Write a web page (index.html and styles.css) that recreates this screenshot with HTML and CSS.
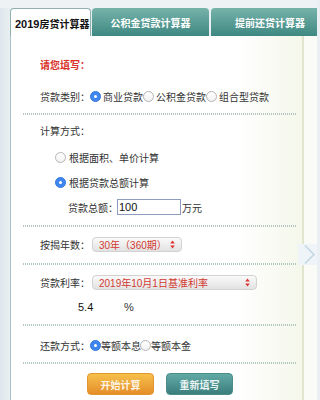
FILE: index.html
```html
<!DOCTYPE html>
<html lang="zh-CN">
<head>
<meta charset="utf-8">
<title>房贷计算器</title>
<link rel="stylesheet" href="styles.css">
</head>
<body>
<div class="page">
  <div class="tabs">
    <div class="tab tab-active"><span class="num">2019</span>房贷计算器</div>
    <div class="tab tab-gjj">公积金贷款计算器</div>
    <div class="tab tab-tq">提前还贷计算器</div>
  </div>
  <div class="panel">
    <div class="form">
      <div class="row title mt18">请您填写：</div>
      <div class="row mt12">
        <span class="label">贷款类别：</span>
        <span class="radio on"></span><span class="opt">商业贷款</span>
        <span class="radio"></span><span class="opt">公积金贷款</span>
        <span class="radio"></span><span class="opt">组合型贷款</span>
      </div>
      <div class="sep mt7"></div>
      <div class="row mt5">计算方式：</div>
      <div class="row indent mt7"><span class="radio"></span><span class="opt">根据面积、单价计算</span></div>
      <div class="row indent mt5"><span class="radio on"></span><span class="opt">根据贷款总额计算</span></div>
      <div class="row indent2 mt5">
        <span class="label">贷款总额：</span>
        <span class="input">100</span>
        <span class="unit">万元</span>
      </div>
      <div class="sep mt8"></div>
      <div class="row mt7">
        <span class="label">按揭年数：</span>
        <span class="select sel-years">30年（360期）<svg class="arr" width="5" height="9" viewBox="0 0 5 9"><path d="M2.5 0.5L4.8 3.6H0.2Z M2.5 8.5L4.8 5.4H0.2Z" fill="#d33"/></svg></span>
      </div>
      <div class="sep mt9"></div>
      <div class="row mt7">
        <span class="label">贷款利率：</span>
        <span class="select sel-rate">2019年10月1日基准利率<svg class="arr" width="5" height="9" viewBox="0 0 5 9"><path d="M2.5 0.5L4.8 3.6H0.2Z M2.5 8.5L4.8 5.4H0.2Z" fill="#d33"/></svg></span>
      </div>
      <div class="row indent3 mt5">
        <span class="rate">5.4</span>
        <span class="pct">%</span>
      </div>
      <div class="sep mt7"></div>
      <div class="row mt9">
        <span class="label">还款方式：</span>
        <span class="radio on"></span><span class="opt opt-r">等额本息</span>
        <span class="radio radio-r"></span><span class="opt opt-r">等额本金</span>
      </div>
      <div class="sep mt7"></div>
      <div class="btns mt9">
        <span class="btn btn-go">开始计算</span>
        <span class="btn btn-reset">重新填写</span>
      </div>
    </div>
    <div class="rule"></div>
    <div class="side"></div>
  </div>
</div>
<svg class="chev" width="19" height="21" viewBox="0 0 19 21"><rect x="0" y="0" width="19" height="21" fill="#eef4f8"/><path d="M7 1.5L16 10.5L7 19.5" fill="none" stroke="#c3d6e4" stroke-width="1.6"/></svg>
</body>
</html>
```

FILE: styles.css
```css
html, body {
  margin: 0;
  padding: 0;
}
body {
  width: 317px;
  height: 400px;
  overflow: hidden;
  position: relative;
  background: linear-gradient(90deg, #dde7ed 0, #e9eff2 10px);
  font-family: "Noto Sans CJK SC", "Liberation Sans", sans-serif;
  font-size: 10px;
  color: #333;
}
.page {
  padding: 8px 0 0 10px;
  height: 392px;
  display: flex;
  flex-direction: column;
  background: linear-gradient(180deg, #eef2f4 0, #eef2f4 8px, transparent 8px);
}
.tabs {
  display: flex;
  height: 28px;
  flex: none;
}
.tab {
  box-sizing: border-box;
  height: 28px;
  display: flex;
  align-items: center;
  justify-content: center;
  font-weight: bold;
  color: #fff;
  border-radius: 4px 4px 0 0;
  background: linear-gradient(180deg, #76b2aa, #3e8882);
  white-space: nowrap;
}
.num {
  font-family: "Liberation Sans", sans-serif;
  font-size: 11px;
}
.tab-active {
  width: 81px;
  background: #fff;
  color: #111;
  border: 1px solid #8fb0ad;
  border-bottom: none;
  justify-content: flex-start;
  padding-left: 4px;
  padding-top: 2px;
}
.tab-gjj {
  width: 117px;
  margin-left: 1px;
}
.tab-tq {
  flex: 1;
  margin-left: 2px;
  padding-left: 12px;
  border-radius: 4px 0 0 0;
}
.panel {
  flex: 1;
  display: flex;
}
.form {
  width: 291px;
  border-left: 1px solid #a9c1cd;
  background: linear-gradient(90deg, #fff 0, #fff 78%, #f4f7ea 100%);
}
.rule {
  width: 2px;
  background: #e1e5cd;
}
.side {
  flex: 1;
  background: #fafbf6;
}
.row {
  height: 20px;
  display: flex;
  align-items: center;
  padding-left: 29px;
  white-space: nowrap;
}
.title {
  color: #d8322b;
  font-weight: bold;
}
.mt5 { margin-top: 5px; }
.mt7 { margin-top: 7px; }
.mt8 { margin-top: 8px; }
.mt9 { margin-top: 9px; }
.mt12 { margin-top: 12px; }
.mt18 { margin-top: 18px; }
.label {
  width: 50px;
  flex: none;
}
.radio {
  width: 11px;
  height: 11px;
  box-sizing: border-box;
  border-radius: 50%;
  border: 1px solid #b5b5b5;
  background: linear-gradient(180deg, #fff, #f1f1f1);
  flex: none;
  position: relative;
}
.radio.on {
  background: #3f87ef;
  border-color: #3479e0;
}
.radio.on::after {
  content: "";
  position: absolute;
  left: 3px;
  top: 3px;
  width: 3px;
  height: 3px;
  border-radius: 50%;
  background: #fff;
}
.opt {
  margin-left: 2px;
}
.opt-r {
  margin-left: 0;
}
.radio-r {
  margin-left: -1px;
}
.indent {
  padding-left: 44px;
}
.indent .opt {
  margin-left: 3px;
}
.indent2 {
  padding-left: 57px;
}
.indent3 {
  padding-left: 65px;
}
.input {
  box-sizing: border-box;
  width: 64px;
  height: 16px;
  margin-left: -1px;
  border: 1px solid #8e9cc0;
  background: #fff;
  font-family: "Liberation Sans", sans-serif;
  font-size: 11px;
  color: #111;
  line-height: 14px;
  padding-left: 1px;
}
.unit {
  margin-left: 1px;
}
.select {
  box-sizing: border-box;
  height: 15px;
  margin-left: 2px;
  border: 1px solid #d2d2d2;
  border-radius: 4px;
  background: linear-gradient(180deg, #fafafa, #e2e2e2);
  color: #d23a32;
  font-family: "Liberation Sans", "Noto Sans CJK SC", sans-serif;
  font-size: 10px;
  display: flex;
  align-items: center;
  padding-left: 6px;
  position: relative;
}
.sel-years { width: 90px; }
.sel-rate { width: 165px; }
.arr {
  position: absolute;
  right: 6px;
  top: 2px;
}
.rate {
  box-sizing: border-box;
  width: 44px;
  height: 16px;
  background: #fff;
  font-family: "Liberation Sans", sans-serif;
  font-size: 11px;
  color: #111;
  line-height: 16px;
  padding-left: 2px;
}
.pct {
  margin-left: 4px;
  font-family: "Liberation Sans", sans-serif;
  font-size: 11px;
}
.sep {
  height: 2px;
  margin-left: 12px;
  margin-right: 5px;
  background-image: repeating-linear-gradient(90deg, #b3c7c0 0, #b3c7c0 1px, transparent 1px, transparent 2px);
}
.btns {
  display: flex;
  gap: 12px;
  padding-left: 76px;
}
.btn {
  width: 67px;
  height: 22px;
  box-sizing: border-box;
  border-radius: 4px;
  display: flex;
  align-items: center;
  justify-content: center;
  color: #fdf4e4;
  font-weight: bold;
  font-size: 10px;
}
.btn-go {
  background: linear-gradient(180deg, #f6c04a, #e58d2a);
  border: 1px solid #e0962e;
}
.btn-reset {
  background: linear-gradient(180deg, #62a9a6, #3b7f7d);
  border: 1px solid #4a8c8a;
  color: #e9f3f2;
}
.chev {
  position: absolute;
  left: 298px;
  top: 244px;
}
```
